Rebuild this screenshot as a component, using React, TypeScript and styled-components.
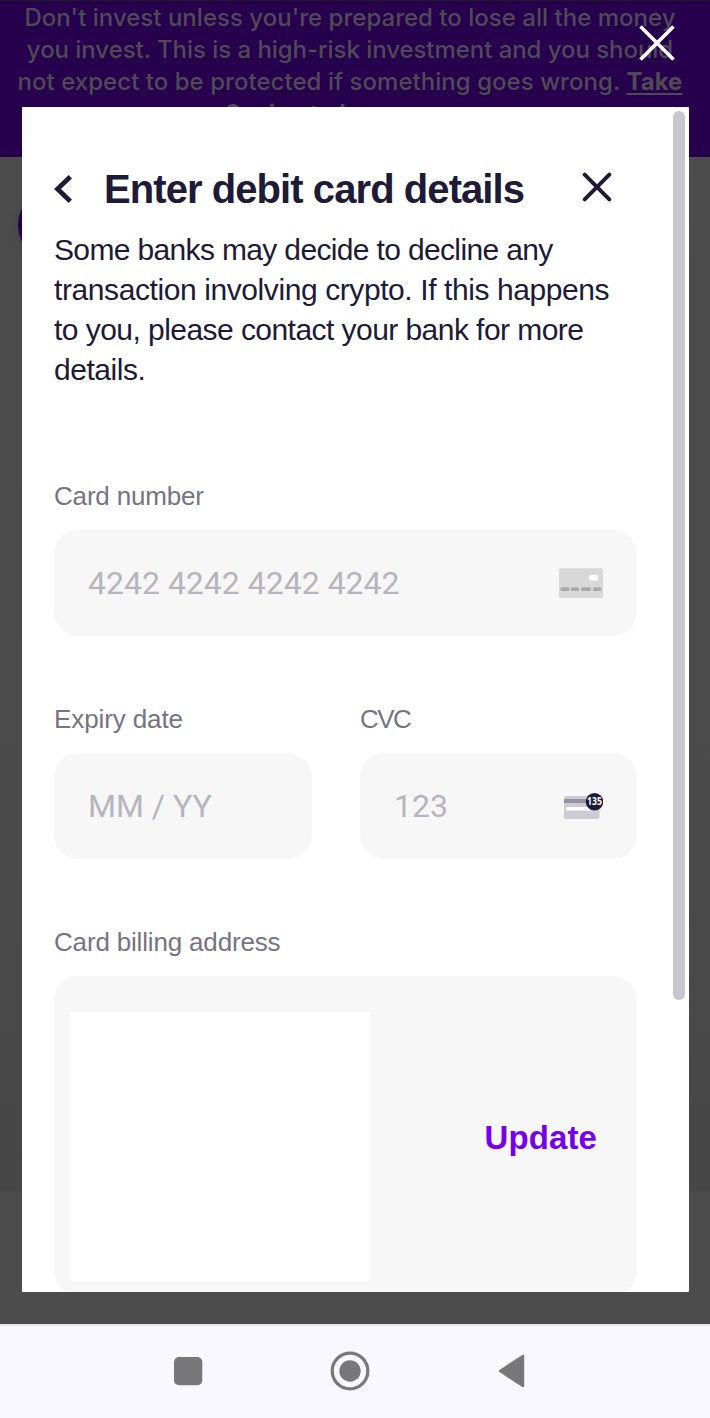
import React from "react";
import styled, { createGlobalStyle } from "styled-components";

const GlobalStyle = createGlobalStyle`
  *, *::before, *::after { box-sizing: border-box; }
  body { margin: 0; background: #4c4c4c; }
  button { border: 0; padding: 0; background: none; font: inherit; color: inherit; display: block; }
`;

const ink = "#201a36";
const sans = `"Liberation Sans", Arial, sans-serif`;

const Screen = styled.div`
  position: relative;
  width: 710px;
  height: 1418px;
  overflow: hidden;
  display: flex;
  flex-direction: column;
  font-family: ${sans};
`;

const Page = styled.div`
  height: 1324px;
  background: linear-gradient(#4c4c4c 157px, #4b4b4b 295px, #4a4a4a 900px, #464646 1191px, #4c4c4c 1192px);
`;

const Banner = styled.div`
  height: 157px;
  padding: 1px 10px 0 0;
  border-top: 1px solid #1d1a2a;
  background: #26004d;
  color: #504a57;
  font: 500 24px/32px Inter, sans-serif;
  text-align: center;
`;

const Line = styled.div<{ $spacing: number; $shift?: number }>`
  white-space: nowrap;
  letter-spacing: ${(p) => p.$spacing}px;
  padding-right: ${(p) => p.$shift ?? 0}px;
`;

const BannerLink = styled.span`
  font-weight: 700;
  text-decoration: underline;
  text-decoration-thickness: 2px;
  text-underline-offset: 3px;
`;

const ChatBubble = styled.div`
  width: 76px;
  height: 76px;
  margin: 30px 0 0 18px;
  border-radius: 50%;
  background: #26004d;
  box-shadow: 0 2px 12px rgba(0, 0, 0, 0.1);
`;

const Overlay = styled.div`
  position: absolute;
  inset: 0 0 94px 0;
  padding: 107px 21px 32px 22px;
`;

const OverlayClose = styled.button`
  position: absolute;
  top: 25px;
  right: 35px;
`;

const Dialog = styled.section`
  position: relative;
  height: 1185px;
  overflow: hidden;
  padding: 58px 52px 0 32px;
  background: #fff;
  color: ${ink};
`;

const ScrollThumb = styled.div`
  position: absolute;
  top: 4px;
  right: 4px;
  width: 12px;
  height: 889px;
  border-radius: 6px;
  background: #c8c6d0;
`;

const Header = styled.header`
  display: flex;
  align-items: center;
  height: 48px;
`;

const BackButton = styled.button`
  margin-top: 4px;
`;

const Title = styled.h1`
  flex: 1;
  margin: 0 0 0 30px;
  font-size: 40px;
  line-height: 48px;
  font-weight: 700;
  letter-spacing: -0.93px;
  white-space: nowrap;
`;

const CloseButton = styled.button`
  margin-right: 25px;
`;

const Notice = styled.div`
  margin: 17px 0 90px;
  font-size: 30px;
  line-height: 40px;
`;

const Row = styled.div`
  display: grid;
  grid-template-columns: 258px 277px;
  column-gap: 48px;
  margin: 67px 0;
`;

const Label = styled.label<{ $spacing?: number }>`
  display: block;
  height: 32px;
  margin-bottom: 18px;
  font-size: 26px;
  line-height: 32px;
  letter-spacing: ${(p) => p.$spacing ?? 0}px;
  color: #767382;
`;

const Input = styled.div`
  display: flex;
  align-items: center;
  justify-content: space-between;
  height: 106px;
  padding: 0 34px;
  border-radius: 24px;
  background: #f7f7f7;
  color: #b6b4be;
  font: 400 32px/38px Roboto, sans-serif;
`;

const AddressCard = styled.div`
  display: flex;
  align-items: center;
  justify-content: space-between;
  height: 319px;
  padding: 0 40px 0 16px;
  border-radius: 24px;
  background: #f7f7f7;
`;

const AddressBlank = styled.div`
  width: 300px;
  height: 270px;
  margin-top: 23px;
  background: #fff;
`;

const UpdateButton = styled.button`
  color: #7600ec;
  font-size: 33px;
  line-height: 40px;
  font-weight: 700;
  margin-top: 4px;
  letter-spacing: 0.1px;
`;

const NavBar = styled.nav`
  display: flex;
  justify-content: space-between;
  align-items: center;
  height: 94px;
  padding: 0 185px 2px 173px;
  border-top: 2px solid #e5e4ed;
  background: #f9f8ff;
`;

const CardIcon = () => (
  <svg width="44" height="30" viewBox="0 0 44 30">
    <rect y="0.3" width="44" height="29.7" rx="1.5" fill="#d8d8d8" />
    <rect x="30.3" y="7" width="8.7" height="5.6" rx="1.5" fill="#fff" />
    <g fill="#a9a9a9">
      <rect x="1.5" y="19.2" width="9" height="3.8" rx="1.6" />
      <rect x="12" y="19.2" width="8.3" height="3.8" rx="1.6" />
      <rect x="22" y="19.2" width="10" height="3.8" rx="1.6" />
      <rect x="34" y="19.2" width="8.5" height="3.8" rx="1.6" />
    </g>
  </svg>
);

const CvcIcon = () => (
  <svg width="40" height="28" viewBox="0 0 40 28">
    <rect x="1" y="4" width="35.5" height="23" rx="2.5" fill="#cccad3" />
    <rect x="1" y="7" width="35.5" height="4" fill="#9492a0" />
    <rect x="3" y="15" width="31" height="3.5" rx="1" fill="#fff" />
    <circle cx="31.5" cy="9.7" r="8.8" fill={ink} />
    <text x="31.6" y="13.2" textAnchor="middle" fontFamily="Open Sans" fontWeight="700" fontSize="10" textLength="15" lengthAdjust="spacingAndGlyphs" fill="#fff">135</text>
  </svg>
);

export default function App() {
  return (
    <Screen>
      <GlobalStyle />
      <Page>
        <Banner>
          <Line $spacing={0.02}>Don't invest unless you're prepared to lose all the money</Line>
          <Line $spacing={-0.05}>you invest. This is a high-risk investment and you should</Line>
          <Line $spacing={0.04}>not expect to be protected if something goes wrong. <BannerLink>Take</BannerLink></Line>
          <Line $spacing={0.15} $shift={8}><BannerLink>2 mins to learn more</BannerLink></Line>
        </Banner>
        <ChatBubble />
      </Page>
      <NavBar>
        <svg width="30" height="30" viewBox="0 0 30 30"><rect x="1" y="1" width="28.3" height="28.3" rx="5" fill="#78787a" /></svg>
        <svg width="40" height="40" viewBox="0 0 40 40">
          <circle cx="20" cy="20" r="17.8" fill="none" stroke="#78787a" strokeWidth="3.2" />
          <circle cx="20" cy="20" r="10.7" fill="#78787a" />
        </svg>
        <svg width="28" height="34" viewBox="0 0 28 34"><path d="M3 17 L26 2 V32 Z" fill="#78787a" stroke="#78787a" strokeWidth="2.4" strokeLinejoin="round" /></svg>
      </NavBar>
      <Overlay>
        <Dialog>
          <Header>
            <BackButton aria-label="Back">
              <svg width="20" height="30" viewBox="0 0 20 30"><path d="M16.3 2.7 L3.5 15 L16.3 27.3" fill="none" stroke={ink} strokeWidth="4.8" /></svg>
            </BackButton>
            <Title>Enter debit card details</Title>
            <CloseButton aria-label="Close">
              <svg width="30" height="30" viewBox="0 0 30 30"><path d="M2.7 2.7 L27.3 27.3 M27.3 2.7 L2.7 27.3" stroke={ink} strokeWidth="4" strokeLinecap="round" /></svg>
            </CloseButton>
          </Header>
          <Notice>
            <Line $spacing={-0.65}>Some banks may decide to decline any</Line>
            <Line $spacing={-0.41}>transaction involving crypto. If this happens</Line>
            <Line $spacing={-0.55}>to you, please contact your bank for more</Line>
            <Line $spacing={-0.45}>details.</Line>
          </Notice>
          <div>
            <Label $spacing={-0.18}>Card number</Label>
            <Input>4242 4242 4242 4242<CardIcon /></Input>
          </div>
          <Row>
            <div>
              <Label $spacing={-0.1}>Expiry date</Label>
              <Input>MM / YY</Input>
            </div>
            <div>
              <Label $spacing={-1.5}>CVC</Label>
              <Input>123<CvcIcon /></Input>
            </div>
          </Row>
          <Label $spacing={-0.17}>Card billing address</Label>
          <AddressCard>
            <AddressBlank />
            <UpdateButton>Update</UpdateButton>
          </AddressCard>
          <ScrollThumb />
        </Dialog>
        <OverlayClose aria-label="Dismiss">
          <svg width="36" height="36" viewBox="0 0 36 36"><path d="M1.5 1.5 L34.5 34.5 M34.5 1.5 L1.5 34.5" stroke="#fff" strokeWidth="3.6" /></svg>
        </OverlayClose>
      </Overlay>
    </Screen>
  );
}
